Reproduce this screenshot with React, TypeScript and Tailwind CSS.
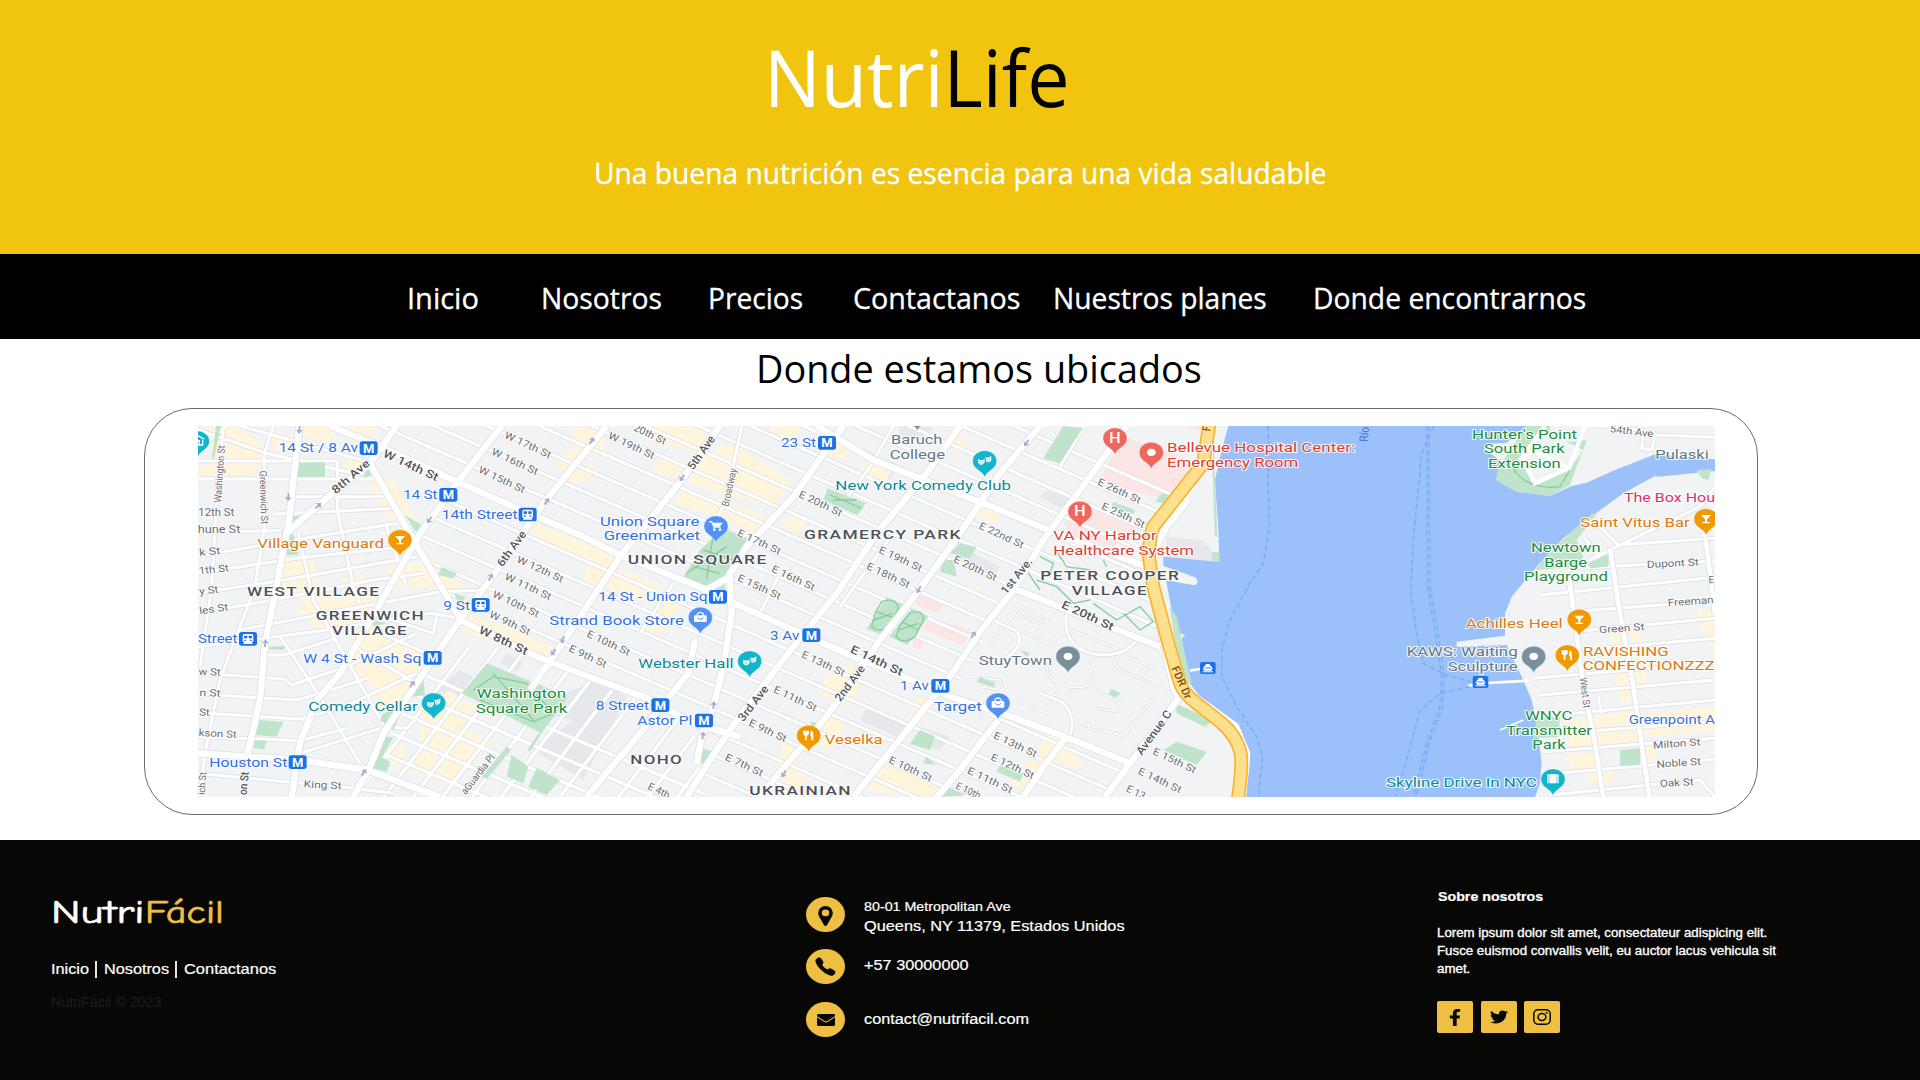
import { useLayoutEffect, useRef, useState, type ReactNode } from "react";
import { FaFacebookF, FaTwitter } from "react-icons/fa";
import { IoCall } from "react-icons/io5";

/** Single line of text condensed or widened to fill its box. */
function FitText({ className, children }: { className: string; children: ReactNode }) {
  const inner = useRef<HTMLSpanElement>(null);
  const [scale, setScale] = useState(1);
  useLayoutEffect(() => {
    const el = inner.current;
    if (el && el.parentElement) setScale(el.parentElement.clientWidth / el.offsetWidth);
  }, []);
  return (
    <span className={`block whitespace-nowrap ${className}`}>
      <span ref={inner} className="inline-block origin-left" style={{ transform: `scaleX(${scale})` }}>
        {children}
      </span>
    </span>
  );
}

/* Map space: three units per pixel. Column offsets of the four map sheets. */
const A = 0;
const B = 1260;
const C = 2520;
const D = 3660;

const BLUE = "#3372df";
const TEAL = "#0d8a96";
const GREEN = "#1e8e3e";
const ORANGE = "#db7a10";
const RED = "#df3d34";
const SLATE = "#637885";
const DARK = "#4f5257";

type Place = [sheet: number, x: number, y: number, w: number, text: string, color: string];
const places: Place[] = [
  [A, 416, 157, 238, "14 St / 8 Av", BLUE],
  [A, 790, 296, 102, "14 St", BLUE],
  [A, 905, 358, 228, "14th Street", BLUE],
  [A, 352, 444, 380, "Village Vanguard", ORANGE],
  [A, 910, 630, 80, "9 St", BLUE],
  [A, 174, 729, 118, "Street", BLUE],
  [A, 490, 788, 354, "W 4 St - Wash Sq", BLUE],
  [A, 505, 933, 328, "Comedy Cellar", TEAL],
  [A, 208, 1101, 234, "Houston St", BLUE],
  [A, 1010, 895, 268, "Washington", GREEN],
  [A, 1007, 939, 275, "Square Park", GREEN],
  [A, 1228, 674, 404, "Strand Book Store", BLUE],
  [B, 663, 141, 105, "23 St", BLUE],
  [B, 993, 132, 154, "Baruch", SLATE],
  [B, 989, 176, 166, "College", SLATE],
  [B, 826, 271, 527, "New York Comedy Club", TEAL],
  [B, 120, 377, 298, "Union Square", BLUE],
  [B, 131, 421, 289, "Greenmarket", BLUE],
  [B, 115, 603, 328, "14 St - Union Sq", BLUE],
  [B, 630, 719, 88, "3 Av", BLUE],
  [B, 235, 804, 286, "Webster Hall", TEAL],
  [B, 1020, 871, 86, "1 Av", BLUE],
  [B, 1122, 932, 143, "Target", BLUE],
  [B, 107, 929, 160, "8 Street", BLUE],
  [B, 232, 975, 165, "Astor Pl", BLUE],
  [B, 794, 1031, 174, "Veselka", ORANGE],
  [C, 561, 157, 564, "Bellevue Hospital Center:", RED],
  [C, 561, 201, 394, "Emergency Room", RED],
  [C, 220, 421, 310, "VA NY Harbor", RED],
  [C, 220, 465, 422, "Healthcare System", RED],
  [C, -4, 794, 220, "StuyTown", SLATE],
  [D, 336, 117, 315, "Hunter's Point", GREEN],
  [D, 372, 160, 242, "South Park", GREEN],
  [D, 384, 204, 218, "Extension", GREEN],
  [D, 886, 177, 160, "Pulaski", SLATE],
  [D, 792, 307, 273, "The Box Hou", "#e0306b"],
  [D, 661, 381, 328, "Saint Vitus Bar", ORANGE],
  [D, 513, 457, 209, "Newtown", GREEN],
  [D, 553, 501, 128, "Barge", GREEN],
  [D, 492, 544, 252, "Playground", GREEN],
  [D, 317, 683, 291, "Achilles Heel", ORANGE],
  [D, 140, 769, 333, "KAWS: Waiting", SLATE],
  [D, 263, 814, 210, "Sculpture", SLATE],
  [D, 669, 767, 257, "RAVISHING", ORANGE],
  [D, 668, 811, 396, "CONFECTIONZZZ", ORANGE],
  [D, 495, 961, 142, "WNYC", GREEN],
  [D, 438, 1004, 258, "Transmitter", GREEN],
  [D, 517, 1047, 100, "Park", GREEN],
  [D, 806, 971, 259, "Greenpoint A", BLUE],
  [D, 78, 1161, 452, "Skyline Drive In NYC", TEAL],
];

type Area = [sheet: number, x: number, y: number, w: number, text: string];
const areas: Area[] = [
  [A, 321, 589, 400, "WEST VILLAGE"],
  [A, 527, 660, 328, "GREENWICH"],
  [A, 576, 704, 228, "VILLAGE"],
  [B, 203, 492, 420, "UNION SQUARE"],
  [B, 732, 416, 474, "GRAMERCY PARK"],
  [B, 211, 1093, 158, "NOHO"],
  [B, 568, 1185, 308, "UKRAINIAN"],
  [C, 181, 540, 420, "PETER COOPER"],
  [C, 275, 584, 229, "VILLAGE"],
];

type Street = [sheet: number, cx: number, cy: number, angle: number, len: number, text: string, strong?: boolean];
const streetNames: Street[] = [
  [A, 238, 222, -86, 172, "Washington St"],
  [A, 372, 292, 88, 160, "Greenwich St"],
  [A, 632, 230, -41, 138, "8th Ave", true],
  [A, 812, 196, 25, 178, "W 14th St", true],
  [A, 1164, 134, 25, 150, "W 17th St"],
  [A, 1125, 184, 25, 150, "W 16th St"],
  [A, 1086, 238, 25, 150, "W 15th St"],
  [A, 1115, 446, -54, 124, "6th Ave", true],
  [A, 1201, 507, 25, 150, "W 12th St"],
  [A, 1165, 559, 25, 150, "W 11th St"],
  [A, 1128, 611, 25, 150, "W 10th St"],
  [A, 1110, 668, 25, 132, "W 9th St"],
  [A, 1090, 722, 25, 158, "W 8th St", true],
  [A, 229, 337, 0, 108, "12th St"],
  [A, 237, 388, 0, 128, "hune St"],
  [A, 209, 454, -6, 64, "k St"],
  [A, 221, 507, -6, 90, "1th St"],
  [A, 206, 570, -6, 58, "y St"],
  [A, 221, 626, -8, 88, "les St"],
  [A, 209, 815, 2, 66, "w St"],
  [A, 210, 878, 2, 64, "n St"],
  [A, 193, 936, 2, 32, "St"],
  [A, 233, 1000, 3, 114, "kson St"],
  [A, 186, 1150, -86, 68, "ich St"],
  [A, 312, 1150, -84, 70, "on St", true],
  [A, 548, 1154, 3, 114, "King St"],
  [A, 1013, 1122, -52, 144, "aGuardia Pl"],
  [B, 270, 102, 25, 104, "20th St"],
  [B, 215, 136, 25, 150, "W 19th St"],
  [B, 424, 158, -55, 116, "5th Ave", true],
  [B, 507, 262, -78, 116, "Broadway"],
  [B, 782, 310, 25, 140, "E 20th St"],
  [B, 598, 425, 25, 140, "E 17th St"],
  [B, 700, 533, 25, 140, "E 16th St"],
  [B, 598, 560, 25, 140, "E 15th St"],
  [B, 1022, 476, 25, 140, "E 19th St"],
  [B, 985, 525, 25, 140, "E 18th St"],
  [B, 1246, 504, 25, 140, "E 20th St"],
  [B, 146, 728, 25, 140, "E 10th St"],
  [B, 84, 768, 25, 122, "E 9th St"],
  [B, 950, 782, 25, 170, "E 14th St", true],
  [B, 790, 790, 25, 140, "E 13th St"],
  [B, 706, 895, 25, 140, "E 11th St"],
  [B, 870, 850, -53, 126, "2nd Ave", true],
  [B, 580, 910, -52, 126, "3rd Ave", true],
  [B, 624, 991, 25, 122, "E 9th St"],
  [B, 553, 1094, 25, 122, "E 7th St"],
  [B, 297, 1171, 25, 70, "E 4th"],
  [B, 1052, 1106, 25, 140, "E 10th St"],
  [B, 1290, 1140, 25, 146, "E 11th St"],
  [B, 1225, 1171, 25, 78, "E 10th"],
  [C, 65, 405, 25, 144, "E 22nd St"],
  [C, 418, 272, 25, 140, "E 26th St"],
  [C, 430, 345, 25, 140, "E 25th St"],
  [C, 110, 528, -51, 128, "1st Ave.", true],
  [C, 323, 647, 25, 168, "E 20th St", true],
  [C, 605, 848, 66, 104, "FDR Dr", true],
  [C, 522, 998, -54, 156, "Avenue C", true],
  [C, 106, 1033, 25, 140, "E 13th St"],
  [C, 98, 1098, 25, 140, "E 12th St"],
  [C, 584, 1081, 25, 140, "E 15th St"],
  [C, 540, 1140, 25, 140, "E 14th St"],
  [C, 468, 1176, 25, 60, "E 13"],
  [C, 680, 86, -86, 14, "F", true],
  [D, 815, 93, 7, 132, "54th Ave"],
  [D, 938, 489, -3, 156, "Dupont St"],
  [D, 1054, 538, -3, 16, "E"],
  [D, 992, 603, -4, 138, "Freeman"],
  [D, 785, 684, -4, 136, "Green St"],
  [D, 676, 878, 83, 92, "West St"],
  [D, 950, 1030, -4, 142, "Milton St"],
  [D, 956, 1088, -4, 134, "Noble St"],
  [D, 950, 1147, -3, 102, "Oak St"],
];

type PinKind = "glass" | "masks" | "cart" | "bag" | "food" | "dot" | "film" | "house" | "H";
const pins: [sheet: number, x: number, y: number, color: string, kind: PinKind][] = [
  [A, 172, 92, "#12b5cb", "house"],
  [A, 780, 388, "#f29900", "glass"],
  [A, 881, 878, "#12b5cb", "masks"],
  [B, 468, 347, "#5491f5", "cart"],
  [B, 421, 621, "#5491f5", "bag"],
  [B, 569, 752, "#12b5cb", "masks"],
  [B, 746, 975, "#f29900", "food"],
  [B, 1274, 151, "#12b5cb", "masks"],
  [B, 1314, 878, "#5491f5", "bag"],
  [B, 1072, 12, "#78909c", "dot"],
  [C, 405, 83, "#ee675c", "H"],
  [C, 514, 126, "#ee675c", "dot"],
  [C, 300, 303, "#ee675c", "H"],
  [C, 264, 738, "#78909c", "dot"],
  [D, 1038, 325, "#f29900", "glass"],
  [D, 658, 627, "#f29900", "glass"],
  [D, 521, 738, "#78909c", "dot"],
  [D, 622, 734, "#f29900", "food"],
  [D, 579, 1106, "#12b5cb", "film"],
];

const metro: [sheet: number, x: number, y: number][] = [
  [A, 659, 124], [A, 898, 264], [A, 851, 753], [A, 446, 1066], [B, 774, 108], [B, 447, 570],
  [B, 727, 685], [B, 1114, 837], [B, 274, 895], [B, 405, 941],
];
const trains: [sheet: number, x: number, y: number][] = [[A, 1136, 323], [A, 995, 594], [A, 297, 696]];
const ferries: [sheet: number, x: number, y: number][] = [[C, 660, 786], [D, 338, 828]];

const arrows: [sheet: number, x: number, y: number, angle: number][] = [
  [A, 478, 90, 185], [A, 445, 292, 185], [A, 535, 317, 50], [A, 868, 360, 215], [A, 1220, 304, 35],
  [A, 1052, 531, 30], [A, 376, 729, 5], [A, 817, 852, 35], [A, 1268, 720, 200], [A, 1240, 757, 215],
  [A, 672, 1117, 30], [B, 96, 122, 35], [B, 366, 234, 215], [B, 1076, 569, 210], [B, 1240, 704, 35],
  [B, 461, 915, 5], [B, 429, 1006, 10], [B, 671, 1122, 210], [C, 139, 129, 215],
];

/* Numbered cross streets of the Manhattan grid. */
const crossStreets = Array.from({ length: 30 }, (_, i) => {
  const n = i - 2;
  const y = (x: number) => 320 + 0.436 * (x - 1120) + (14 - n) * 69;
  return `M500 ${y(500)} L3700 ${y(3700)}`;
});
const downtownStreets = Array.from({ length: 9 }, (_, i) => `M700 ${760 + i * 72} L1900 ${1270 + i * 72}`);
const downtownAvenues = Array.from({ length: 14 }, (_, i) => `M${900 + i * 88} 740 L${480 + i * 88} 1290`);

const minorRoads = [
  "M174 183H592", "M174 237H700", "M450 290H735", "M400 342L770 325", "M174 395L420 392",
  "M174 468L430 425L770 370", "M174 520L470 475L790 440", "M174 580L400 545L830 470",
  "M174 640L400 600L700 540L850 520", "M300 690L560 640L900 575L1040 570", "M174 740L560 690L870 640L960 655",
  "M174 820L435 837L455 855L620 800L830 700", "M174 882L470 900L540 880L680 835", "M174 938L480 957L600 925L830 820",
  "M174 1010L480 1022L620 985", "M480 1060L720 985", "M592 180L592 330L640 560L660 610", "M475 400L520 600L660 850L740 990",
  "M420 710L540 890L660 1090", "M740 380L800 560", "M250 78L228 330L215 560L180 800", "M400 78L372 165L375 370L345 560L240 840L195 1060L180 1191",
  "M375 765L430 765L590 715", "M700 690L860 760", "M700 640L880 700L890 650", "M640 740L830 850", "M174 1120L640 1165L760 1180",
  "M174 90L380 160L640 220", "M300 78L700 190", "M260 78L174 150", "M740 980L800 985L830 955",
  "M1805 78L1760 290L1735 350", "M2260 78L2190 200L2080 350", "M2260 400L2100 620", "M1920 520L1860 640",
  "M1600 550L1500 700", "M2820 100L2760 200", "M2900 390L3060 470",
];

const mediumRoads = [
  "M478 78L447 360L405 580L375 730L360 900L322 1065",
  "M770 78L690 190L560 295L437 400",
  "M690 190L820 420L960 655",
  "M1085 78L950 250L840 400L720 610L600 820L530 900L480 1030L455 1191",
  "M1400 78L1210 310L1050 540L960 660L830 850L730 1000L690 1100L640 1191",
  "M1740 78L1625 240L1440 470L1270 725L1170 870",
  "M2110 78L1960 290L1820 440L1765 530",
  "M1700 570L1770 530L1775 640L1750 800L1720 920L1685 1010L1670 1090",
  "M1665 720L1645 820L1500 1000L1390 1130L1340 1191",
  "M2460 78L2360 220L2210 400L2090 580L1960 740L1790 960L1710 1080L1640 1191",
  "M2700 78L2580 220L2460 400L2330 580L2220 720L2110 880L2020 1000L1900 1140L1860 1191",
  "M2960 78L2820 270L2710 420L2620 570L2520 695L2430 830L2310 980L2140 1191",
  "M2575 960L2520 1030L2460 1110L2390 1191",
  "M2780 1010L2710 1100L2650 1191",
  "M3120 890L2970 1090L2895 1191",
  "M570 78L700 130L940 240L1120 320L1320 405L1430 460L1700 570L1760 600L1960 690L2130 765L2290 830L2430 890L2600 945L2800 1020L2970 1090",
  "M2030 78L2200 180L2580 330L2750 400L3020 500",
  "M2620 565L3060 740",
  "M960 660L1190 770L1320 820L1510 890L1660 970L1800 1010",
  "M174 1060L480 1080L680 1110L900 1191",
  "M3145 300L3080 380L3020 500L3100 860L3120 900",
];

const stuyLoops = [
  "M2780 640C2765 720 2820 765 2890 765C2940 765 2965 750 2990 722",
  "M2540 652L2625 690Q2650 710 2630 745L2600 775",
  "M2700 880L2765 905Q2795 930 2797 970L2790 1010",
];
const stuyPaths = [
  "M2550 730L2640 620L2725 660L2712 675L2640 645",
  "M2650 695L2735 737L2750 710",
  "M2720 790C2720 850 2770 865 2830 862Q2865 850 2858 825L2840 790L2870 765",
  "M2790 688L2935 748",
  "M2915 770L2940 810L3010 840L3095 880",
  "M2850 862L2938 908L2930 935L2870 925",
  "M2790 1000L2845 970L2845 985L2940 1005L2950 1010L3050 880",
  "M2635 885L2650 910L2690 930L2730 940",
  "M2740 895L2760 862", "M2780 900L2790 862",
  "M2960 770L3035 800L3020 820",
  "M2490 830L2580 840L2590 870L2520 860",
];

const queensRoads = [
  "M4310 505L4725 482", "M4200 585L4725 532", "M4330 632L4725 602", "M4330 692L4725 655", "M4390 745L4725 715",
  "M4180 835L4725 788", "M4195 886L4725 840", "M4300 940L4725 900", "M4320 995L4725 965", "M4210 1055L4725 1015",
  "M4230 1122L4725 1078", "M4230 1185L4680 1140L4725 1191", "M4430 435L4725 415", "M4280 515L4430 440L4680 320L4725 260",
  "M4360 360L4440 440", "M4335 415L4380 480", "M4375 890L4385 940",
];
const hunterRoads = ["M4545 105L4725 112", "M4320 78L4440 78L4545 103L4535 150L4505 145L4510 100"];
const queensAvenues = [
  "M4285 520L4310 700L4330 860L4360 1000L4390 1191", "M4410 445L4440 640L4480 860L4500 1000L4528 1191",
  "M4680 330L4700 440L4725 640",
];

const cream = [
  "174,90 300,78 380,150 340,225 174,225 174,200 240,190", "380,100 470,110 465,150 400,150", "490,78 600,78 560,130 490,110",
  "590,80 720,80 690,120 620,110", "690,230 760,240 830,370 750,360 700,290", "620,170 700,190 700,230 620,210",
  "430,480 520,470 530,590 620,600 640,560 600,540 680,530 720,620 700,680 540,690 470,640 490,600 410,580",
  "740,500 900,480 900,560 760,560", "860,460 920,530 980,560 960,590 900,560", "640,690 700,680 860,760 830,840 740,900 620,790",
  "660,860 740,900 800,850 820,880 760,960 700,900", "850,920 930,870 1000,920 960,990 1060,1020 930,1160 800,1110 830,1060",
  "720,1020 800,1040 780,1100 740,1090", "990,640 1240,740 1210,780 960,690", "1190,370 1440,470 1400,510 1170,405",
  "1240,180 1320,140 1320,230 1250,200", "1300,80 1400,90 1380,170 1300,150", "1530,78 1700,80 1680,160 1500,110",
  "1560,170 1640,180 1600,240 1540,210", "1700,160 1780,130 1950,240 1900,320 1640,250", "1630,260 1880,350 1840,400 1770,360 1600,310",
  "1290,220 1370,190 1350,240 1290,250", "1820,170 1950,240 1880,300 1800,260", "1900,78 1980,80 1960,130 1870,110",
  "1940,350 2010,350 1980,400 1930,380", "1340,500 1480,520 1640,600 1560,700 1510,690 1560,620 1420,570 1330,550",
  "2060,120 2130,130 2120,180 2040,160", "2180,180 2260,200 2240,240 2160,220", "2430,100 2480,110 2460,160 2400,130",
  "2530,310 2580,340 2560,370 2510,350", "2060,830 2130,790 2170,840 2130,920 2030,880", "2080,930 2120,960 2080,1050 2000,1020",
  "1930,1030 1990,1050 1970,1100 2000,1130 1960,1191 1890,1150", "2230,1080 2400,1150 2370,1191 2180,1170", "2330,890 2380,920 2350,960 2310,930",
  "2740,980 2815,1005 2720,1110 2650,1170 2610,1150 2700,1040", "2760,1030 2832,1085 2820,1105 2720,1080",
  "4410,700 4450,700 4470,900 4440,910", "4475,690 4500,690 4520,850 4490,870", "4670,630 4725,630 4725,760 4700,710 4680,680",
  "4290,960 4490,930 4500,1040 4290,1050", "4510,940 4725,920 4725,990 4510,1010", "4280,1060 4360,1060 4370,1110 4300,1120",
  "4345,1120 4430,1110 4410,1155 4350,1150", "4520,1030 4560,1030 4540,1100 4510,1090",
];

const greyBlocks = [
  "1090,920 1270,880 1380,840 1460,890 1330,1140 1180,1050 1300,960", "2190,170 2270,200 2250,240 2180,215", "2180,920 2310,980 2270,1010 2160,960",
  "2460,440 2580,500 2560,530 2440,490", "2720,270 2790,290 2770,330 2700,290", "2340,980 2430,1010 2400,1050 2320,1030",
  "870,890 960,810 1030,850 930,920", "2280,80 2380,80 2350,120 2270,120", "3080,410 3190,420 3235,485 3080,480",
  "1100,760 1150,790 1130,815 1080,790",
];

const parks = [
  "228,78 243,78 222,178 216,170", "473,187 555,187 555,231 468,231", "680,200 695,225 670,235", "450,350 495,345 450,375",
  "425,395 460,405 475,465 430,465", "795,345 845,375 830,400", "905,500 950,520 940,535 895,525", "940,578 975,590 970,635",
  "390,740 435,738 430,750 385,748", "352,960 430,965 410,1010 345,1005", "345,1020 380,1022 372,1048 340,1044",
  "700,660 740,670 700,680", "815,860 850,840 855,885 820,890", "730,940 790,920 760,990 720,960", "735,1010 760,1012 700,1120 690,1100",
  "705,1060 750,1085 740,1115 700,1105", "1100,1040 1113,1048 1040,1138 1025,1130",
  "1115,1065 1165,1100 1150,1150 1100,1130",
  "1190,1105 1260,1140 1220,1185 1165,1160", "1205,1000 1170,1055 1163,1050 1195,1000",
  "1040,790 1285,890 1205,1000 965,880",
  "1750,385 1822,415 1762,520 1700,560 1630,530 1680,450", "1735,560 1755,550 1755,575 1725,570",
  "2062,265 2178,310 2152,345 2050,300",
  "2240,592 2290,614 2232,706 2180,688", "2315,625 2365,650 2302,735 2248,710",
  "2460,430 2510,440 2490,475 2430,460", "2410,480 2440,480 2450,530 2400,515", "2340,990 2385,1008 2370,1050 2310,1032",
  "2360,1070 2390,1095 2350,1090", "2420,1160 2480,1185 2400,1191", "1680,1045 1720,1055 1695,1095 1678,1085", "2010,965 2040,970 2020,985",
  "2770,78 2828,85 2760,190 2710,175", "2920,305 2985,330 2980,342 2915,320", "3065,280 3090,285 3070,310 3045,305",
  "3220,100 3232,410 3224,410 3218,200", "3218,455 3238,458 3238,485 3215,480",
  "3088,620 3110,650 3125,720 3155,850 3140,850 3105,720", "3105,910 3220,960 3195,980 3110,940", "3110,1025 3200,1055 3170,1095 3070,1050",
  "2520,830 2568,850 2560,862 2510,845", "2915,866 2942,880 2925,893 2905,882", "2580,1095 2650,1120 2640,1145 2570,1115", "2640,750 2670,760 2660,770",
  "4160,78 4230,78 4225,120 4300,125 4340,120 4330,150 4310,200 4290,255 4230,288 4130,275 4069,240 4075,205 4110,150",
  "4358,340 4370,342 4310,420 4330,470 4310,500 4185,510 4210,480 4290,400", "4345,490 4405,462 4405,500 4350,505",
  "4190,950 4260,950 4255,1010 4180,1015", "4670,210 4715,208 4705,240 4685,235", "4440,1050 4500,1045 4500,1095 4440,1098",
];
const pinkBlocks = [
  "2950,110 3130,170 3160,260 3090,300 2875,245", "2770,370 2850,320 3000,370 2920,440 2800,410", "2325,580 2412,610 2395,640 2330,615",
  "2365,650 2490,690 2470,735 2350,690", "2330,705 2360,715 2340,750 2315,740", "3140,78 3190,78 3185,95",
];
const parkPaths = [
  "M1060 820L1180 960M1000 870L1060 830L1160 850L1240 940L1180 965L1020 900",
  "M1690 450L1780 480M1660 500L1740 520M1720 400L1700 540M1640 520L1760 440",
  "M2070 285L2165 325M2080 300L2150 300",
  "M2225 605Q2270 590 2275 625L2245 680Q2220 700 2195 680L2205 640ZM2200 660L2260 640M2210 635L2265 655",
  "M2310 640Q2350 625 2350 660L2325 710Q2290 735 2268 710L2280 675ZM2275 690L2335 670M2285 665L2335 690",
  "M2665 520L2700 570M2690 540L2750 560L2800 610L2850 600M2740 440L2780 500L2850 510M2700 470L2740 490L2730 520M2860 610L2930 660L3000 620L3040 665L3000 690L2950 640M2900 500L2890 480",
  "M4120 180C4110 230 4180 270 4260 260L4290 210",
];

const poly = (list: string[], fill: string) => list.map((p) => <polygon key={p} points={p} fill={fill} />);

function Roads({ lines, width }: { lines: string[]; width: number }) {
  const d = lines.join(" ");
  return (
    <g fill="none" strokeLinejoin="round" strokeLinecap="butt">
      <path d={d} stroke="#dfe2e8" strokeWidth={width + 5} />
      <path d={d} stroke="#ffffff" strokeWidth={width} />
    </g>
  );
}

function PinGlyph({ kind }: { kind: PinKind }) {
  const line = { fill: "none", stroke: "#fff", strokeWidth: 4 };
  switch (kind) {
    case "glass":
      return <path d="M-15 19H15L3 32V40H11V44H-11V40H-3V32Z" fill="#fff" />;
    case "masks":
      return (
        <g>
          <path d="M-20 26Q-10 31 0 26V35Q-4 43 -11 43Q-18 42 -20 35ZM2 20Q11 23 20 16V27Q18 36 9 35L4 33V25H2Z" fill="#fff" />
          <path d="M-16 33H-12M-8 33H-4M-13 38Q-10 36 -7 38M6 25H9M13 24H16M8 30Q12 32 14 29" fill="none" stroke="#12b5cb" strokeWidth="2" />
        </g>
      );
    case "cart":
      return (
        <g>
          <path d="M-21 17H-13L-6 33H14" {...line} />
          <path d="M-12 20H20L12 31H-6Z" fill="#fff" />
          <circle cx="-5" cy="41" r="4" fill="#fff" />
          <circle cx="12" cy="41" r="4" fill="#fff" />
        </g>
      );
    case "bag":
      return (
        <g>
          <rect x="-19" y="24" width="38" height="20" rx="3" fill="#fff" />
          <path d="M-9 26V20Q0 10 9 20V26" {...line} />
          <path d="M-9 31Q0 41 9 31" fill="none" stroke="#5491f5" strokeWidth="3" />
        </g>
      );
    case "food":
      return <path d="M-17 16H1V25Q-1 31 -6 31V45H-11V31Q-17 30 -17 25ZM6 17Q15 16 14 28V45H8V33H5Z" fill="#fff" />;
    case "dot":
      return <ellipse cx="0" cy="30" rx="13" ry="11" fill="#fff" />;
    case "film":
      return (
        <g>
          <path d="M-17 15H17V43H-17Z" fill="#fff" />
          <path d="M-12 15V43M12 15V43" stroke="#12b5cb" strokeWidth="3.5" strokeDasharray="4 4" />
        </g>
      );
    case "house":
      return <path d="M-18 24L2 14L20 24M-12 26V42H16V26M-3 42V29H6V42" {...line} />;
    case "H":
      return <text x="0" y="44" textAnchor="middle" fontSize="42" fontWeight="500" fill="#fff" textLength="34" lengthAdjust="spacingAndGlyphs">H</text>;
  }
}

function CityMap() {
  const grid = "570,78 940,240 840,400 960,650 1260,790 1660,970 1700,1191 2895,1191 2970,1090 2600,940 2430,890 2620,570 3060,740 3020,500 3040,400 3150,250 3195,78";
  const highway = "M3210 60L3190 190L3040 380Q3028 410 3027 470L3040 560L3085 730L3120 850Q3130 880 3170 910L3240 965Q3290 1005 3302 1060Q3308 1100 3294 1195";
  return (
    <svg viewBox="174 78 4551 1113" preserveAspectRatio="none" className="block h-[371px] w-[1517px]" fontFamily="Roboto, sans-serif">
      <defs>
        <clipPath id="grid"><polygon points={grid} /></clipPath>
        <clipPath id="downtown"><polygon points="830,850 960,700 1190,775 1660,975 1690,1191 650,1191" /></clipPath>
      </defs>
      <rect x="174" y="78" width="4551" height="1113" fill="#f1f3f4" />
      {poly(greyBlocks, "#e6e8ec")}
      {poly(cream, "#fef5dc")}
      {poly(pinkBlocks, "#fce5e5")}
      <g clipPath="url(#downtown)">
        <Roads lines={[...downtownStreets, ...downtownAvenues]} width={10} />
      </g>
      <g clipPath="url(#grid)">
        <Roads lines={crossStreets} width={9} />
      </g>
      <Roads lines={minorRoads} width={9} />
      <Roads lines={stuyPaths} width={4} />
      <Roads lines={stuyLoops} width={8} />
      <path d="M3265 78L3245 150L3225 240L3235 390L3238 485L3200 482L3070 470L3070 498L3120 515L3165 532Q3180 545 3165 556L3140 552L3078 540L3095 630L3120 700L3136 705L3125 715L3150 850L3180 890L3260 950L3315 1030L3330 1080L3325 1130L3318 1191H4185L4200 1150L4205 1090L4190 970L4175 900L4145 830L4100 735L3950 740V725L4095 707L4095 640L4115 590L4190 500L4270 415L4360 345L4450 280L4545 228L4553 230L4725 213V178L4545 163L4420 212L4340 248L4295 258L4230 288L4130 275L4069 240L4080 180L4035 150L4045 132L4100 128L4160 78Z" fill="#9cc0fa" />
      <Roads lines={queensRoads} width={9} />
      <Roads lines={hunterRoads} width={9} />
      <Roads lines={queensAvenues} width={14} />
      {poly(parks, "#c0e4cb")}
      <path d={parkPaths.join(" ")} fill="none" stroke="#86cd9b" strokeWidth="4" />
      <polygon points="4210,90 4330,150 4290,205 4190,250 4140,180" fill="#f1f3f4" />
      <g fill="none" stroke="#fff" strokeWidth="12">
        <path d="M4145 175L4185 250L4287 205L4335 78M4215 78L4140 180L4180 150L4287 205" />
        <path d="M3150 812L3180 807M4020 850L4165 842M3985 857L4000 855" strokeWidth="8" />
        <path d="M4080 990L4150 960" strokeWidth="5" />
      </g>
      <Roads lines={mediumRoads} width={19} />
      <g fill="none" stroke="#7baaf5" strokeWidth="4" strokeDasharray="16 8">
        <path d="M3385 78V270L3388 380L3370 490L3330 550L3270 660L3245 750L3245 830L3290 920L3350 1010L3368 1070L3355 1191" />
        <path d="M3860 78L3862 560L3885 690L3905 830L3900 920L3860 1030L3820 1191M3867 78L3870 560L3893 690L3912 830L3908 920L3868 1030L3828 1191" />
        <path d="M3880 80L3845 160L3820 420L3812 570L3830 700L3850 790L3920 825L3990 845M3990 860L3900 880L3840 930L3800 1080L3765 1191" />
      </g>
      <g fill="none" strokeLinejoin="round">
        <path d="M3210 78L3190 200L3140 290L3062 400L3045 470L3055 560L3130 860L3290 975L3325 1060L3312 1191" stroke="#fff" strokeWidth="12" />
        <path d={highway} stroke="#f9b32c" strokeWidth="42" />
        <path d={highway} stroke="#fde08e" strokeWidth="32" />
      </g>
      <g fill="#a9aed0">
        {arrows.map(([s, x, y, r]) => (
          <path key={`${s + x}-${y}`} d="M0 -12L10 0H3V12H-3V0H-10Z" transform={`translate(${s + x} ${y}) rotate(${r})`} />
        ))}
      </g>
      <g stroke="#fff" strokeOpacity="0.85" strokeWidth="6" strokeLinejoin="round" className="[paint-order:stroke]">
        {streetNames.map(([s, x, y, r, len, text, strong]) => (
          <text key={`${s}-${x}-${y}`} transform={`translate(${s + x} ${y}) rotate(${r})`} x={-len / 2} y={11} fontSize={strong ? 34 : 30} fontWeight={strong ? 500 : 400} stroke={text.startsWith("F") && s === C ? "#fde08e" : undefined} fill={text.startsWith("F") && s === C ? "#8a4b08" : strong ? "#55585c" : "#6a6e73"} textLength={len} lengthAdjust="spacingAndGlyphs">
            {text}
          </text>
        ))}
        <text transform="translate(3674 103) rotate(-86)" x="-22" y="11" fontSize="36" fill="#3f78cf" stroke="none" textLength="45" lengthAdjust="spacingAndGlyphs">Río</text>
        {areas.map(([s, x, y, w, text]) => (
          <text key={`${s}-${x}-${y}`} x={s + x} y={y} fontSize="38" fontWeight="500" letterSpacing="3" fill={DARK} textLength={w} lengthAdjust="spacingAndGlyphs">
            {text}
          </text>
        ))}
        {places.map(([s, x, y, w, text, color]) => (
          <text key={`${s}-${x}-${y}`} x={s + x} y={y} fontSize="39" fill={color} textLength={w} lengthAdjust="spacingAndGlyphs">
            {text}
          </text>
        ))}
      </g>
      {pins.map(([s, x, y, color, kind]) => (
        <g key={`${s}-${x}-${y}`} transform={`translate(${s + x} ${y + 1})`}>
          <path d="M0 79C-7 59 -36 56 -36 31A36 31 0 1 1 36 31C36 56 7 59 0 79Z" fill={color} stroke="#fff" strokeOpacity="0.5" strokeWidth="1.5" />
          <PinGlyph kind={kind} />
        </g>
      ))}
      {metro.map(([s, x, y]) => (
        <g key={`${s}-${x}`} transform={`translate(${s + x} ${y})`}>
          <rect width="54" height="41" rx="8" fill="#1a73e8" />
          <text x="10" y="34" fontSize="37" fontWeight="700" fill="#fff" textLength="34" lengthAdjust="spacingAndGlyphs">M</text>
        </g>
      ))}
      {trains.map(([s, x, y]) => (
        <g key={`${s}-${x}`} transform={`translate(${s + x} ${y})`}>
          <rect width="54" height="41" rx="8" fill="#1a73e8" />
          <path fillRule="evenodd" d="M16 6H38Q43 6 43 11V27Q43 31 38 31L42 36H12L16 31Q11 31 11 27V11Q11 6 16 6ZM15 11V19H25V11ZM29 11V19H39V11ZM16 23V27H21V23ZM33 23V27H38V23Z" fill="#fff" />
        </g>
      ))}
      {ferries.map(([s, x, y]) => (
        <g key={`${s}-${x}`} transform={`translate(${s + x} ${y})`}>
          <rect width="47" height="36" rx="6" fill="#1a73e8" />
          <path d="M17 6H30V11H33L38 20L34 26H13L9 20L14 11H17ZM8 28H39V31H8Z" fill="#fff" />
          <path d="M14 18H33" stroke="#1a73e8" strokeWidth="2.5" />
        </g>
      ))}
    </svg>
  );
}

const navItems = [
  { label: "Inicio", box: "w-[72px]" },
  { label: "Nosotros", box: "ml-[62px] w-[121px]" },
  { label: "Precios", box: "ml-[46px] w-[95px]" },
  { label: "Contactanos", box: "ml-[50px] w-[167px]" },
  { label: "Nuestros planes", box: "ml-[33px] w-[214px]" },
  { label: "Donde encontrarnos", box: "ml-[46px] w-[273px]" },
];

function ContactIcon({ children }: { children: ReactNode }) {
  return <span className="flex h-[35px] w-[39px] shrink-0 items-center justify-center rounded-[50%] bg-[#eebf42] text-[#070806]">{children}</span>;
}

function Social({ children }: { children: ReactNode }) {
  return <a className="flex h-8 w-9 items-center justify-center rounded-[2px] bg-[#eebf42] text-[#070806]">{children}</a>;
}

function MarkerIcon() {
  return (
    <svg viewBox="0 0 15 20" className="mt-0.5 h-5 w-[15px]">
      <path fillRule="evenodd" d="M7.5 0A7.3 7 0 0 1 14.8 7C14.8 9 14 10 13.3 11.6L8.9 19.2Q7.5 20.6 6.1 19.2L1.7 11.6C1 10 .2 9 .2 7A7.3 7 0 0 1 7.5 0ZM7.5 3.6A3.7 3.3 0 1 0 7.5 10.2A3.7 3.3 0 1 0 7.5 3.6Z" fill="currentColor" />
    </svg>
  );
}

function EnvelopeIcon() {
  return (
    <svg viewBox="0 0 18 12" className="h-3 w-[18px]">
      <rect width="18" height="12" rx="1.2" fill="currentColor" />
      <path d="M0 2.6L7.4 7.4Q9 8.4 10.6 7.4L18 2.6" fill="none" stroke="#eebf42" strokeWidth="1.1" />
    </svg>
  );
}

function InstagramIcon() {
  return (
    <svg viewBox="0 0 18 16" className="h-4 w-[18px]" fill="none" stroke="currentColor">
      <rect x="0.8" y="0.8" width="16.4" height="14.4" rx="4.2" strokeWidth="1.5" />
      <ellipse cx="9" cy="8" rx="3.9" ry="3.5" strokeWidth="1.5" />
      <circle cx="13.6" cy="3.8" r="1" fill="currentColor" stroke="none" />
    </svg>
  );
}

export default function App() {
  return (
    <div className="flex h-[1080px] w-[1920px] flex-col overflow-hidden bg-white font-['Segoe_UI','Open_Sans',sans-serif]">
      <header className="h-[254px] shrink-0 bg-[#f1c50f] pt-[37px]">
        <h1 className="ml-[764px] text-[79px] leading-[80px] text-white">
          <FitText className="w-[305px]">Nutri<span className="text-black">Life</span></FitText>
        </h1>
        <p className="mt-[36px] ml-[594px] text-[29px] leading-[40px] text-white [-webkit-text-stroke:0.3px]">
          <FitText className="w-[733px]">Una buena nutrición es esencia para una vida saludable</FitText>
        </p>
      </header>
      <nav className="flex h-[85px] shrink-0 bg-black pt-6 pl-[407px] text-[29px] leading-[40px] text-white [-webkit-text-stroke:0.3px]">
        {navItems.map((item) => (
          <a key={item.label}><FitText className={item.box}>{item.label}</FitText></a>
        ))}
      </nav>
      <main className="h-[501px] shrink-0 pt-1">
        <h2 className="ml-[756px] text-[39px] leading-[50px] text-black">
          <FitText className="w-[446px]">Donde estamos ubicados</FitText>
        </h2>
        <section className="mt-[15px] ml-36 flex h-[407px] w-[1614px] rounded-[48px] border border-[#6b6b6b] pt-[17px] pl-[53px]">
          <CityMap />
        </section>
      </main>
      <footer className="flex grow bg-[#070806] font-['Liberation_Sans',Arial,sans-serif] text-white [-webkit-text-stroke:0.2px]">
        <div className="w-[806px] pt-[52px] pl-[51px]">
          <div className="flex font-['Comic_Sans_MS','Comic_Neue',Lato,sans-serif] text-[33px] leading-[40px] [-webkit-text-stroke:0.7px]">
            <FitText className="w-[94px]">Nutri</FitText>
            <FitText className="w-[79px] text-[#eebf42]">Fácil</FitText>
          </div>
          <div className="mt-[27px] flex text-[15px] leading-[20px]">
            <FitText className="w-[38px]">Inicio</FitText>
            <span className="mt-[2px] ml-[6px] h-[17px] w-[2px] bg-white/90" />
            <FitText className="ml-[7px] w-[65px]">Nosotros</FitText>
            <span className="mt-[2px] ml-[6px] h-[17px] w-[2px] bg-white/90" />
            <FitText className="ml-[7px] w-[92px]">Contactanos</FitText>
          </div>
          <p className="mt-[13px] text-[14px] leading-[20px] text-[#1c1d1b]">
            <FitText className="w-[110px]">NutriFácil © 2023</FitText>
          </p>
        </div>
        <div className="flex w-[631px] flex-col gap-[17px] pt-[57px]">
          <div className="flex gap-[19px]">
            <ContactIcon><MarkerIcon /></ContactIcon>
            <div className="h-[34px]">
              <FitText className="w-[147px] text-[13.5px] leading-[19px]">80-01 Metropolitan Ave</FitText>
              <FitText className="w-[261px] text-[15.5px] leading-[20px]">Queens, NY 11379, Estados Unidos</FitText>
            </div>
          </div>
          <div className="flex gap-[19px]">
            <ContactIcon><IoCall className="h-[21px] w-[23px]" preserveAspectRatio="none" /></ContactIcon>
            <FitText className="w-[105px] text-[15.5px] leading-[32px]">+57 30000000</FitText>
          </div>
          <div className="mt-px flex gap-[19px]">
            <ContactIcon><EnvelopeIcon /></ContactIcon>
            <FitText className="w-[165px] text-[15.5px] leading-[33px]">contact@nutrifacil.com</FitText>
          </div>
        </div>
        <div className="pt-[47px]">
          <h3 className="text-[13px] leading-[20px] font-bold"><FitText className="ml-px w-[105px]">Sobre nosotros</FitText></h3>
          <div className="mt-[17px] text-[12.5px] leading-[18px] [-webkit-text-stroke:0.35px]">
            <FitText className="w-[330px]">Lorem ipsum dolor sit amet, consectateur adispicing elit.</FitText>
            <FitText className="w-[339px]">Fusce euismod convallis velit, eu auctor lacus vehicula sit</FitText>
            <FitText className="w-[33px]">amet.</FitText>
          </div>
          <div className="mt-[23px] flex">
            <Social><FaFacebookF className="h-[17px] w-[12px]" preserveAspectRatio="none" /></Social>
            <span className="w-2" />
            <Social><FaTwitter className="h-[16px] w-[18px]" preserveAspectRatio="none" /></Social>
            <span className="w-[7px]" />
            <Social><InstagramIcon /></Social>
          </div>
        </div>
      </footer>
    </div>
  );
}
